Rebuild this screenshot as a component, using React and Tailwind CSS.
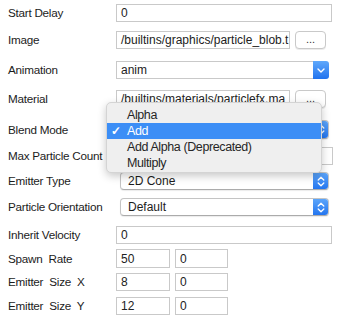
import React from "react";

const FONT = { fontFamily: '"Liberation Sans", Arial, sans-serif' };

function Down() {
  return (
    <svg width="8" height="5" viewBox="0 0 8 5" fill="none">
      <path d="M1 1 L4 4 L7 1" stroke="white" strokeWidth="1.4" strokeLinecap="round" strokeLinejoin="round" />
    </svg>
  );
}

function UpDown() {
  return (
    <svg width="8" height="11" viewBox="0 0 8 11" fill="none">
      <path d="M1.2 4 L4 1.3 L6.8 4" stroke="white" strokeWidth="1.3" strokeLinecap="round" strokeLinejoin="round" />
      <path d="M1.2 7 L4 9.7 L6.8 7" stroke="white" strokeWidth="1.3" strokeLinecap="round" strokeLinejoin="round" />
    </svg>
  );
}

function Label({ children }) {
  return (
    <div className="w-[116px] shrink-0 pl-[8px] text-[11.7px] tracking-[-0.25px] leading-none text-[#1c1c1c] whitespace-pre">
      {children}
    </div>
  );
}

function TextInput({ value, w }) {
  return (
    <div
      className={`${w} h-full border border-[#c9c9c9] bg-white pl-[4px] flex items-center text-[12px] leading-none text-[#222] overflow-hidden whitespace-nowrap`}
    >
      {value}
    </div>
  );
}

function DotsButton() {
  return (
    <div className="ml-[5px] w-[31px] h-full rounded-[4px] border border-[#c9c9c9] bg-white shadow-[0_1px_0_rgba(0,0,0,0.08)] flex items-center justify-center text-[11px] leading-none text-[#333] pb-[2px]">
      ...
    </div>
  );
}

function Combo({ value }) {
  return (
    <div className="w-[213px] h-full flex">
      <div className="flex-1 border border-[#c9c9c9] border-r-0 bg-white pl-[4px] flex items-center text-[12px] leading-none text-[#222]">
        {value}
      </div>
      <div className="w-[16px] h-full rounded-r-[3px] bg-gradient-to-b from-[#5fa8fb] to-[#1f72ee] flex items-center justify-center">
        <Down />
      </div>
    </div>
  );
}

function Popup({ value }) {
  return (
    <div className="ml-[4px] w-[209px] h-full flex rounded-[4px] bg-white border border-[#c4c4c4] border-b-[#ababab] shadow-[0_1px_1px_rgba(0,0,0,0.08)] overflow-hidden">
      <div className="flex-1 pl-[7px] flex items-center text-[12px] leading-none text-[#1c1c1c]">{value}</div>
      <div className="w-[16px] -my-px -mr-px bg-gradient-to-b from-[#5fa8fb] to-[#1f72ee] flex items-center justify-center rounded-r-[4px]">
        <UpDown />
      </div>
    </div>
  );
}

function Row({ h, mb, children }) {
  return (
    <div className={`flex items-center ${h} ${mb}`}>{children}</div>
  );
}

export default function App() {
  return (
    <div className="relative w-[342px] h-[320px] bg-white overflow-hidden pt-[4px]" style={FONT}>
      <Row h="h-[18px]" mb="mb-[9px]">
        <Label>Start Delay</Label>
        <TextInput value="0" w="w-[216px]" />
      </Row>
      <Row h="h-[18px]" mb="mb-[12px]">
        <Label>Image</Label>
        <TextInput value="/builtins/graphics/particle_blob.t" w="w-[174px]" />
        <DotsButton />
      </Row>
      <Row h="h-[18px]" mb="mb-[11px]">
        <Label>Animation</Label>
        <Combo value="anim" />
      </Row>
      <Row h="h-[18px]" mb="mb-[12px]">
        <Label>Material</Label>
        <TextInput value="/builtins/materials/particlefx.ma" w="w-[174px]" />
        <DotsButton />
      </Row>
      <Row h="h-[19px]" mb="mb-[8px]">
        <Label>Blend Mode</Label>
        <Popup value="" />
      </Row>
      <Row h="h-[18px]" mb="mb-[7px]">
        <Label>Max Particle Count</Label>
        <TextInput value="" w="w-[217px]" />
      </Row>
      <Row h="h-[18px]" mb="mb-[8px]">
        <Label>Emitter Type</Label>
        <Popup value="2D Cone" />
      </Row>
      <Row h="h-[18px]" mb="mb-[10px]">
        <Label>Particle Orientation</Label>
        <Popup value="Default" />
      </Row>
      <Row h="h-[18px]" mb="mb-[5px]">
        <Label>Inherit Velocity</Label>
        <TextInput value="0" w="w-[216px]" />
      </Row>
      <Row h="h-[19px]" mb="mb-[5px]">
        <Label>{"Spawn  Rate"}</Label>
        <TextInput value="50" w="w-[54px]" />
        <div className="w-[5px]" />
        <TextInput value="0" w="w-[53px]" />
      </Row>
      <Row h="h-[18px]" mb="mb-[6px]">
        <Label>{"Emitter  Size  X"}</Label>
        <TextInput value="8" w="w-[54px]" />
        <div className="w-[5px]" />
        <TextInput value="0" w="w-[53px]" />
      </Row>
      <Row h="h-[18px]" mb="mb-0">
        <Label>{"Emitter  Size  Y"}</Label>
        <TextInput value="12" w="w-[54px]" />
        <div className="w-[5px]" />
        <TextInput value="0" w="w-[53px]" />
      </Row>

      <div className="absolute left-[106px] top-[102px] w-[216px] h-[71px] rounded-[5px] bg-[#efefef] border border-[#d4d4d4] shadow-[0_3px_8px_rgba(0,0,0,0.22)] pt-[4px] text-[12.5px] leading-none tracking-[-0.4px] text-[#262626]">
        <div className="h-[16px] flex items-center pl-[20px]">Alpha</div>
        <div className="h-[16px] flex items-center bg-[#3c8ef6] text-white relative pl-[20px]">
          <span className="absolute left-[4px] text-[12px] font-bold">✓</span>
          Add
        </div>
        <div className="h-[16px] flex items-center pl-[20px]">Add Alpha (Deprecated)</div>
        <div className="h-[16px] flex items-center pl-[20px]">Multiply</div>
      </div>
    </div>
  );
}
